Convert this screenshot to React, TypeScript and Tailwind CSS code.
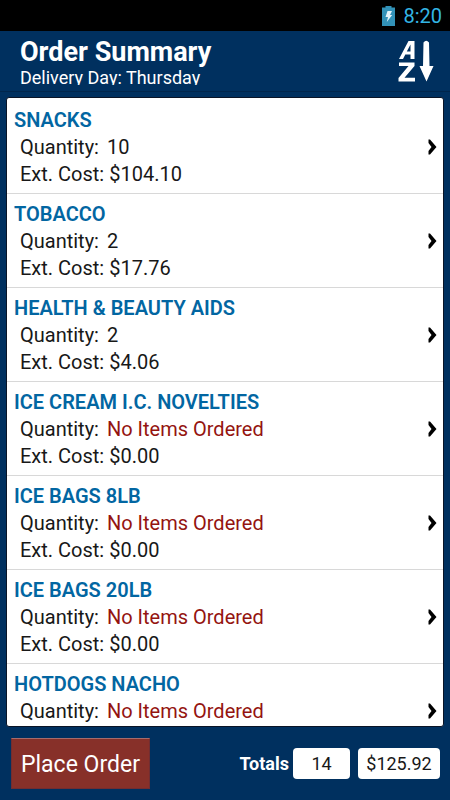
type Category = {
  name: string;
  quantity: number;
  cost: string;
};

const categories: Category[] = [
  { name: "SNACKS", quantity: 10, cost: "$104.10" },
  { name: "TOBACCO", quantity: 2, cost: "$17.76" },
  { name: "HEALTH & BEAUTY AIDS", quantity: 2, cost: "$4.06" },
  { name: "ICE CREAM I.C. NOVELTIES", quantity: 0, cost: "$0.00" },
  { name: "ICE BAGS 8LB", quantity: 0, cost: "$0.00" },
  { name: "ICE BAGS 20LB", quantity: 0, cost: "$0.00" },
  { name: "HOTDOGS NACHO", quantity: 0, cost: "$0.00" },
];

function StatusBar() {
  return (
    <div className="flex h-[31px] shrink-0 items-center justify-end gap-2 bg-black pr-2 text-[#33b5e5]">
      <svg width="13" height="20" viewBox="0 0 13 20" aria-hidden="true">
        <path d="M3.5 0h6v1.500H13V20H0V1.500h3.500z" fill="#3292b8" />
        <path d="M5.500 5H10L8 9h2.200l-5.400 7 1.200-5H3.500z" fill="#e4f4fa" />
      </svg>
      <span className="text-xl">8:20</span>
    </div>
  );
}

function SortIcon() {
  return (
    <svg width="36" height="42" viewBox="0 0 36 42" fill="none" aria-hidden="true">
      <path d="M1 19 10.500 1H16.500V19H12.500V14.500H7.300L5 19zM8.800 11.500H12.500V4.500z" fill="#fff" fillRule="evenodd" />
      <path d="M1 22.500H16.500V26L6.500 37.800H17V41.500H.5V38L10.500 26H1z" fill="#fff" />
      <path d="M25.500 2.500Q28.200-1 31 2.500L31.500 26H35.500L28.500 41.500 21.500 26H25z" fill="#fff" />
    </svg>
  );
}

function Header() {
  return (
    <header className="flex h-[61px] shrink-0 items-start justify-between border-b border-[#01264c] bg-[#00305f] pr-4 pl-5">
      <div className="pt-[5px] text-white">
        <h1 className="text-[27px] leading-8 font-bold">Order Summary</h1>
        <p className="h-[17px] overflow-hidden text-lg leading-[20px]">Delivery Day: Thursday</p>
      </div>
      <button type="button" aria-label="Sort A to Z" className="mt-[9px]">
        <SortIcon />
      </button>
    </header>
  );
}

function CategoryRow({ name, quantity, cost }: Category) {
  return (
    <li className="border-b border-[#d8d8d8]">
      <button type="button" className="flex h-[93px] w-full items-center justify-between pr-[6px] pl-[7px] text-left">
        <div className="pt-0.5 text-xl leading-[27px] text-[#181818]">
          <h2 className="font-semibold text-[#0266a2]">{name}</h2>
          <p className="flex gap-2 pl-[6px]">
            <span>Quantity:</span>
            {quantity > 0 ? <span>{quantity}</span> : <span className="text-[#941410]">No Items Ordered</span>}
          </p>
          <p className="pl-[6px]">Ext. Cost: {cost}</p>
        </div>
        <svg width="9" height="16" viewBox="0 0 9 16" aria-hidden="true">
          <path d="M.5 .5H2L8.500 8 2 15.500H.5V12L3.500 8 .5 4z" fill="#000" />
        </svg>
      </button>
    </li>
  );
}

function Footer() {
  return (
    <footer className="flex shrink-0 items-center justify-between pt-[11px] pr-[10px] pb-[11px] pl-[11px]">
      <button
        type="button"
        className="h-[51px] border border-[#712d31] border-t-[#a66b6b] bg-[#873029] px-[9px] pt-1 text-[23px] text-white"
      >
        Place Order
      </button>
      <div className="flex items-center text-lg">
        <span className="mr-1 font-bold text-white">Totals</span>
        <output aria-label="Total quantity" className="flex h-[31px] w-[57px] items-center justify-center rounded bg-white text-[#181818]">
          14
        </output>
        <output aria-label="Total cost" className="ml-2 flex h-[31px] w-[82px] items-center justify-center rounded bg-white text-[#181818]">
          $125.92
        </output>
      </div>
    </footer>
  );
}

export default function App() {
  return (
    <div className="flex h-screen flex-col bg-[#00305f] font-['Roboto',sans-serif]">
      <StatusBar />
      <Header />
      <main className="mx-[6px] mt-[5px] flex min-h-0 flex-1 flex-col rounded-[3px] border border-[#0a1426] bg-white">
        <ul className="min-h-0 flex-1 overflow-y-auto pt-0.5 [scrollbar-width:none]">
          {categories.map((category) => (
            <CategoryRow key={category.name} {...category} />
          ))}
        </ul>
      </main>
      <Footer />
    </div>
  );
}
